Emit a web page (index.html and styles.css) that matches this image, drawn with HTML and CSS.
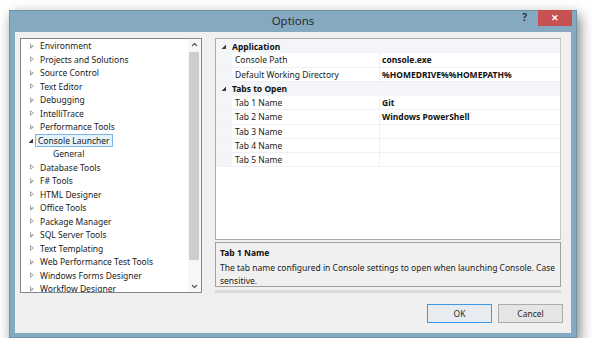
FILE: index.html
```html
<!DOCTYPE html>
<html lang="en">
<head>
  <meta charset="UTF-8" />
  <title>Options</title>
  <meta name="viewport" content="width=device-width,initial-scale=1" />
  <link rel="stylesheet" href="styles.css">
</head>
<body>
  <div class="window">
    <!-- title bar with help and close buttons -->
    <div class="titlebar">
      <span></span>
      <span class="title">Options</span>
      <div class="controls">
        <span class="help">?</span>
        <span class="close">&#x2715;</span>
      </div>
    </div>

    <div class="client">
      <div class="panes">
        <!-- left tree of option pages -->
        <div class="tree">
          <ul class="tree-list">
            <li><span class="arrow"></span>Environment</li>
            <li><span class="arrow"></span>Projects and Solutions</li>
            <li><span class="arrow"></span>Source Control</li>
            <li><span class="arrow"></span>Text Editor</li>
            <li><span class="arrow"></span>Debugging</li>
            <li><span class="arrow"></span>IntelliTrace</li>
            <li><span class="arrow"></span>Performance Tools</li>
            <li><span class="arrow open"></span><span class="selected">Console Launcher</span></li>
            <li class="child">General</li>
            <li><span class="arrow"></span>Database Tools</li>
            <li><span class="arrow"></span>F# Tools</li>
            <li><span class="arrow"></span>HTML Designer</li>
            <li><span class="arrow"></span>Office Tools</li>
            <li><span class="arrow"></span>Package Manager</li>
            <li><span class="arrow"></span>SQL Server Tools</li>
            <li><span class="arrow"></span>Text Templating</li>
            <li><span class="arrow"></span>Web Performance Test Tools</li>
            <li><span class="arrow"></span>Windows Forms Designer</li>
            <li><span class="arrow"></span>Workflow Designer</li>
          </ul>
          <div class="scrollbar">
            <svg class="sb-arrow" width="13" height="12" viewBox="0 0 13 12"><path d="M4 7 L6.5 4.5 L9 7" fill="none" stroke="#606060" stroke-width="1.3"/></svg>
            <div class="thumb"></div>
            <svg class="sb-arrow" width="13" height="12" viewBox="0 0 13 12"><path d="M4 5 L6.5 7.5 L9 5" fill="none" stroke="#606060" stroke-width="1.3"/></svg>
          </div>
        </div>

        <!-- right side: property grid and description -->
        <div class="right">
          <div class="grid">
            <div class="row cat"><span class="cat-arrow"></span><span class="cat-name">Application</span></div>
            <div class="row prop"><span class="name">Console Path</span><span class="value">console.exe</span></div>
            <div class="row prop"><span class="name">Default Working Directory</span><span class="value">%HOMEDRIVE%%HOMEPATH%</span></div>
            <div class="row cat"><span class="cat-arrow"></span><span class="cat-name">Tabs to Open</span></div>
            <div class="row prop"><span class="name">Tab 1 Name</span><span class="value">Git</span></div>
            <div class="row prop"><span class="name">Tab 2 Name</span><span class="value">Windows PowerShell</span></div>
            <div class="row prop"><span class="name">Tab 3 Name</span><span class="value"></span></div>
            <div class="row prop"><span class="name">Tab 4 Name</span><span class="value"></span></div>
            <div class="row prop"><span class="name">Tab 5 Name</span><span class="value"></span></div>
          </div>
          <div class="desc">
            <div class="desc-title">Tab 1 Name</div>
            <p>The tab name configured in Console settings to open when launching Console. Case sensitive.</p>
          </div>
          <div class="splitter"></div>
        </div>
      </div>

      <div class="buttons">
        <button class="btn default">OK</button>
        <button class="btn">Cancel</button>
      </div>
    </div>
  </div>
</body>
</html>
```

FILE: styles.css
```css
body {
    margin: 0;
    background-color: #fff;
    font-family: "Noto Sans", "Liberation Sans", sans-serif;
    font-size: 8.5px;
    color: #1a1a1a;
}

.window {
    width: 568px;
    height: 328px;
    margin: 10px 0 0 9px;
    box-sizing: border-box;
    background-color: #85a9c1;
    border: 1px solid #6f93ab;
    padding: 0 5px 4px 5px;
    display: flex;
    flex-direction: column;
    box-shadow: 3px 5px 12px rgba(0, 0, 0, 0.5);
}

.titlebar {
    height: 21px;
    display: grid;
    grid-template-columns: 1fr auto 1fr;
    align-items: start;
}

.title {
    font-family: "Noto Sans", sans-serif;
    font-size: 11.5px;
    color: #2a2a2a;
    line-height: 20px;
}

.controls {
    display: flex;
    justify-content: flex-end;
    align-items: flex-start;
    margin-right: -1px;
    margin-top: -1px;
}

.help {
    font-size: 10px;
    font-weight: bold;
    color: #333;
    margin-right: 11px;
    line-height: 14px;
}

.close {
    width: 34px;
    height: 16px;
    background-color: #c75050;
    color: #fff;
    font-size: 9px;
    font-weight: bold;
    text-align: center;
    line-height: 16px;
}

.client {
    flex: 1;
    background-color: #f0f0f0;
    padding: 6px 9px 10px 5px;
    display: flex;
    flex-direction: column;
}

.panes {
    display: flex;
    gap: 13px;
    height: 255px;
}

/* option tree */
.tree {
    width: 182px;
    box-sizing: border-box;
    border: 1px solid #828790;
    background-color: #fff;
    display: flex;
    overflow: hidden;
}

.tree-list {
    list-style: none;
    margin: 0;
    padding: 0 0 0 8px;
    flex: 1;
    overflow: hidden;
}

.tree-list li {
    height: 13.5px;
    line-height: 13.5px;
    white-space: nowrap;
    display: flex;
    align-items: center;
}

.tree-list li.child {
    padding-left: 24px;
}

.arrow {
    width: 0;
    height: 0;
    border-top: 3px solid transparent;
    border-bottom: 3px solid transparent;
    border-left: 4px solid #a6a6a6;
    margin-right: 6px;
    margin-left: 1px;
    position: relative;
}

/* hollow triangle */
.arrow::after {
    content: "";
    position: absolute;
    left: -3.4px;
    top: -1.7px;
    border-top: 1.7px solid transparent;
    border-bottom: 1.7px solid transparent;
    border-left: 2.2px solid #fff;
}

.arrow.open {
    border: none;
    width: 4px;
    height: 4px;
    background: linear-gradient(135deg, transparent 50%, #3c3c3c 50%);
    margin: 2px 4px 0 0;
}

.arrow.open::after {
    display: none;
}

.selected {
    background-color: #e5f3fb;
    border: 1px solid #7eb4ea;
    padding: 0 2px;
    line-height: 11px;
    margin-left: -2px;
}

.scrollbar {
    width: 13px;
    background-color: #f7f7f7;
    display: flex;
    flex-direction: column;
}

.sb-arrow {
    display: block;
}

.thumb {
    flex: 1;
    margin: 1px 2px 20px 1px;
    background-color: #cdcdcd;
}

/* property grid */
.right {
    width: 346px;
    display: flex;
    flex-direction: column;
}

.grid {
    height: 204px;
    box-sizing: border-box;
    border: 1px solid #a9a9a9;
    border-right-color: #c8c8c8;
    background-color: #fff;
}

.row {
    height: 14.25px;
    display: flex;
    align-items: center;
    box-sizing: border-box;
}

.cat {
    background-color: #f3f5f9;
}

.cat-arrow {
    width: 4px;
    height: 4px;
    background: linear-gradient(135deg, transparent 50%, #404040 50%);
    margin: 1px 6px 0 6px;
}

.cat-name {
    font-weight: bold;
    color: #111;
}

.prop {
    border-left: 16px solid #f3f5f9;
    border-bottom: 1px solid #eef0f3;
}

.name {
    width: 148px;
    padding-left: 3px;
    box-sizing: border-box;
    height: 100%;
    line-height: 13.25px;
    border-right: 1px solid #eef0f3;
}

.value {
    padding-left: 2px;
    font-weight: bold;
    color: #111;
}

.desc {
    height: 45px;
    margin-top: 2px;
    box-sizing: border-box;
    border: 1px solid #a0a0a0;
    background-color: #f0f0f0;
    padding: 4px 4px 3px 4px;
}

.desc-title {
    font-weight: bold;
    color: #111;
    line-height: 12px;
}

.desc p {
    margin: 2px 0 0 0;
    line-height: 13px;
}

.splitter {
    height: 3px;
    margin-top: 3px;
    background-color: #dadada;
}

/* dialog buttons */
.buttons {
    margin-top: auto;
    display: flex;
    justify-content: flex-end;
    gap: 6px;
    margin-right: -1px;
}

.btn {
    width: 65px;
    height: 19px;
    border: 1px solid #acacac;
    background-color: #e5e5e5;
    font-family: "Noto Sans", sans-serif;
    font-size: 8.5px;
    color: #1e1e1e;
    padding: 0;
}

.btn.default {
    border-color: #3c9ae8;
    background-color: #e8ecf0;
}
```
